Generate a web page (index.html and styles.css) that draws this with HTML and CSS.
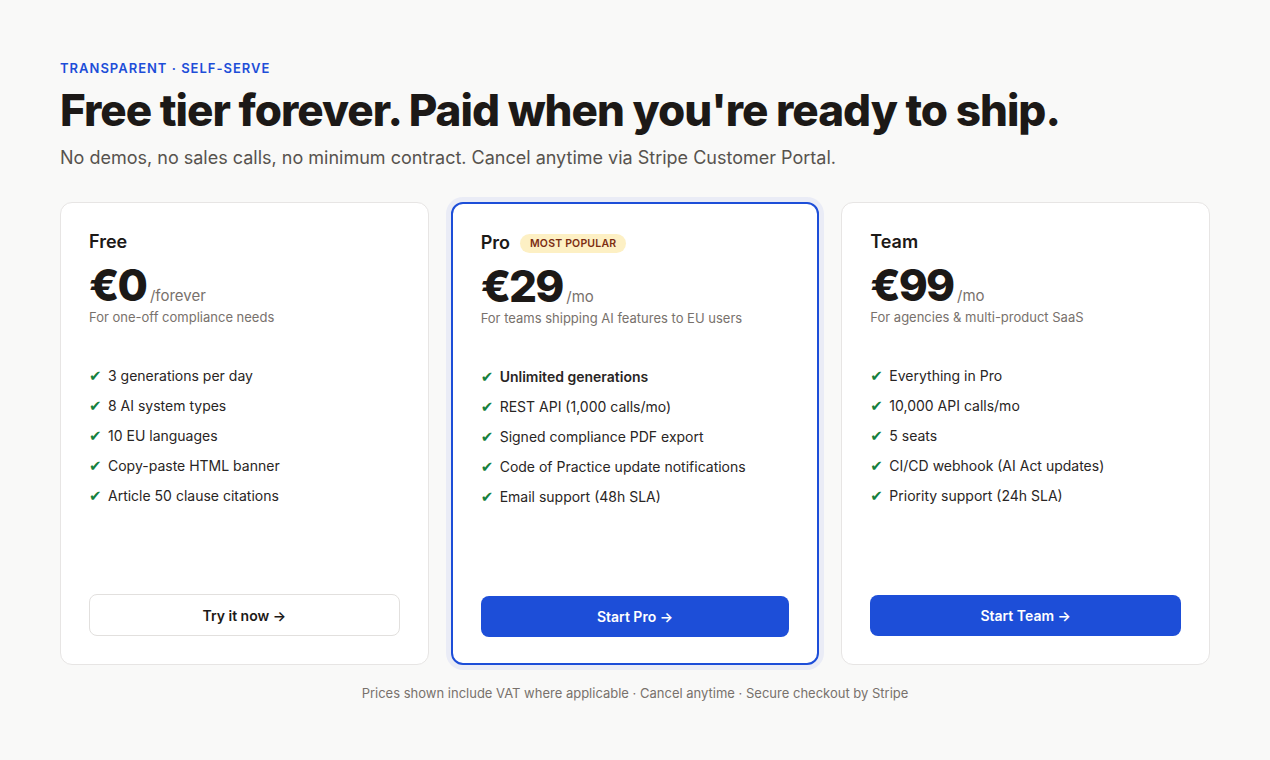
FILE: index.html
```html
<!DOCTYPE html>
<html lang="en">
<head>
<meta charset="utf-8">
<title>Pricing</title>
<link rel="stylesheet" href="styles.css">
</head>
<body>
<main class="page">
  <p class="eyebrow">TRANSPARENT · SELF-SERVE</p>
  <h1 class="title">Free tier forever. Paid when you're ready to ship.</h1>
  <p class="lead">No demos, no sales calls, no minimum contract. Cancel anytime via Stripe Customer Portal.</p>

  <section class="plans">
    <article class="plan">
      <div class="plan-head"><h2 class="plan-name">Free</h2></div>
      <div class="price"><span class="amount">€0</span><span class="period">/forever</span></div>
      <p class="plan-desc">For one-off compliance needs</p>
      <ul class="features">
        <li><span class="check">✔</span>3 generations per day</li>
        <li><span class="check">✔</span>8 AI system types</li>
        <li><span class="check">✔</span>10 EU languages</li>
        <li><span class="check">✔</span>Copy-paste HTML banner</li>
        <li><span class="check">✔</span>Article 50 clause citations</li>
      </ul>
      <a class="btn btn-outline" href="#">Try it now →</a>
    </article>

    <article class="plan plan-featured">
      <div class="plan-head"><h2 class="plan-name">Pro</h2><span class="badge">MOST POPULAR</span></div>
      <div class="price"><span class="amount">€29</span><span class="period">/mo</span></div>
      <p class="plan-desc">For teams shipping AI features to EU users</p>
      <ul class="features">
        <li><span class="check">✔</span><strong>Unlimited generations</strong></li>
        <li><span class="check">✔</span>REST API (1,000 calls/mo)</li>
        <li><span class="check">✔</span>Signed compliance PDF export</li>
        <li><span class="check">✔</span>Code of Practice update notifications</li>
        <li><span class="check">✔</span>Email support (48h SLA)</li>
      </ul>
      <a class="btn btn-primary" href="#">Start Pro →</a>
    </article>

    <article class="plan">
      <div class="plan-head"><h2 class="plan-name">Team</h2></div>
      <div class="price"><span class="amount">€99</span><span class="period">/mo</span></div>
      <p class="plan-desc">For agencies &amp; multi-product SaaS</p>
      <ul class="features">
        <li><span class="check">✔</span>Everything in Pro</li>
        <li><span class="check">✔</span>10,000 API calls/mo</li>
        <li><span class="check">✔</span>5 seats</li>
        <li><span class="check">✔</span>CI/CD webhook (AI Act updates)</li>
        <li><span class="check">✔</span>Priority support (24h SLA)</li>
      </ul>
      <a class="btn btn-primary" href="#">Start Team →</a>
    </article>
  </section>

  <p class="footnote">Prices shown include VAT where applicable · Cancel anytime · Secure checkout by Stripe</p>
</main>
</body>
</html>
```

FILE: styles.css
```css
* { box-sizing: border-box; }
html, body { margin: 0; padding: 0; }
body {
  background: #f9f9f8;
  font-family: Inter, "Noto Sans", "Liberation Sans", sans-serif;
  color: #1c1917;
}
.page {
  width: 1150px;
  margin: 0 auto;
  padding: 60px 0 0;
}
.eyebrow {
  margin: 0;
  font-size: 13px;
  font-weight: 600;
  letter-spacing: 1px;
  color: #1d4ed8;
  line-height: 16px;
}
.title {
  margin: 8px 0 0;
  font-size: 44px;
  font-weight: 800;
  letter-spacing: -1px;
  line-height: 52px;
  color: #1c1917;
}
.lead {
  margin: 10px 0 0;
  font-size: 18px;
  line-height: 24px;
  color: #57534e;
}
.plans {
  display: grid;
  grid-template-columns: repeat(3, 1fr);
  gap: 22px;
  margin-top: 32px;
}
.plan {
  background: #fff;
  border: 1px solid #e7e5e4;
  border-radius: 12px;
  padding: 27px 28px 28px;
  display: flex;
  flex-direction: column;
  height: 463px;
}
.plan-featured {
  border: 2px solid #1d4ed8;
  box-shadow: 0 0 0 5px #eaecf6;
  padding: 27px 28px 26px;
}
.plan-head {
  display: flex;
  align-items: center;
  gap: 10px;
  height: 24px;
}
.plan-name {
  margin: 0;
  font-size: 18px;
  font-weight: 600;
  line-height: 24px;
}
.badge {
  background: #fdf0c4;
  color: #7c2d12;
  font-size: 10.5px;
  font-weight: 600;
  letter-spacing: 0.2px;
  padding: 3px 10px;
  border-radius: 999px;
  line-height: 13px;
}
.price {
  display: flex;
  align-items: baseline;
  gap: 4px;
  margin-top: 11px;
}
.amount {
  font-size: 44px;
  font-weight: 800;
  letter-spacing: -2px;
  line-height: 40px;
}
.period {
  font-size: 15px;
  color: #78716c;
}
.plan-desc {
  margin: 3px 0 0;
  font-size: 13px;
  line-height: 18px;
  color: #78716c;
}
.features {
  list-style: none;
  margin: 40px 0 0;
  padding: 0;
  flex: 1;
}
.features li {
  font-size: 14px;
  line-height: 20px;
  margin-bottom: 10px;
  color: #292524;
  display: flex;
  align-items: center;
}
.features strong { font-weight: 600; }
.check {
  font-family: "DejaVu Sans", sans-serif;
  color: #15803d;
  font-size: 15px;
  width: 19px;
  flex: none;
}
.btn {
  display: flex;
  align-items: center;
  justify-content: center;
  height: 42px;
  border-radius: 8px;
  font-size: 14px;
  font-weight: 600;
  text-decoration: none;
}
.btn-outline {
  border: 1px solid #e2e0de;
  color: #1c1917;
  background: #fff;
}
.btn-primary {
  background: #1d4ed8;
  color: #fff;
  height: 41px;
}
.footnote {
  margin: 19px 0 0;
  text-align: center;
  font-size: 13px;
  color: #78716c;
  line-height: 18px;
}
```
